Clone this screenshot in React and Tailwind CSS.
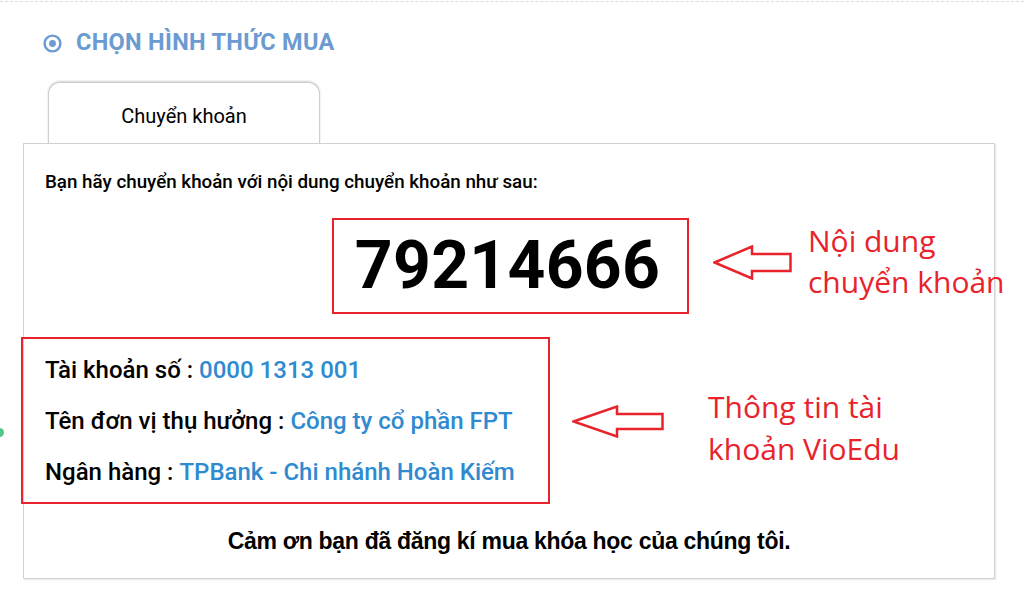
import React from "react";

function Arrow({ w, h, headW, shaftH }) {
  const cy = h / 2;
  const st = cy - shaftH / 2;
  const sb = cy + shaftH / 2;
  return (
    <svg width={w} height={h} viewBox={`0 0 ${w} ${h}`} className="block">
      <polygon
        points={`1.5,${cy} ${headW},1.5 ${headW},${st} ${w - 1.5},${st} ${w - 1.5},${sb} ${headW},${sb} ${headW},${h - 1.5}`}
        fill="none"
        stroke="#e8232b"
        strokeWidth="2.5"
        strokeLinejoin="miter"
      />
    </svg>
  );
}

export default function App() {
  return (
    <div className="relative w-[1024px] h-[603px] overflow-hidden bg-white font-['Roboto',sans-serif] text-black">
      <div className="border-t border-dashed border-[#dcdcdc] mt-px" />
      <div className="absolute left-[-5px] top-[428px] w-[9px] h-[9px] rounded-full bg-[#52c48e]" />

      {/* heading */}
      <div className="flex items-center pl-[43px] pt-[29px] h-[53px]">
        <svg width="19" height="19" viewBox="0 0 20 20" className="block">
          <circle cx="10" cy="10" r="8.3" fill="none" stroke="#6b9bd1" strokeWidth="2.6" />
          <circle cx="10" cy="10" r="3.6" fill="#6b9bd1" />
        </svg>
        <span className="ml-[14px] text-[23.5px] font-bold leading-none text-[#6b9bd1] tracking-[0.3px]">
          CHỌN HÌNH THỨC MUA
        </span>
      </div>

      {/* tab */}
      <div className="ml-[48px] mt-[27px] w-[272px] h-[62px] rounded-t-[12px] border border-b-0 border-[#cfcfcf] shadow-[0_-1px_2px_rgba(0,0,0,0.18)] flex items-center justify-center bg-white">
        <span className="text-[20px] leading-none mt-[4px]">Chuyển khoản</span>
      </div>

      {/* panel */}
      <div className="relative ml-[23px] w-[972px] h-[436px] -mt-px border border-[#d2d2d2] shadow-[1px_1px_1px_rgba(0,0,0,0.08)] bg-white">
        <div className="pl-[21px] pt-[26px] text-[18.8px] font-medium leading-[24px]">
          Bạn hãy chuyển khoản với nội dung chuyển khoản như sau:
        </div>

        <div className="flex justify-center mt-[24px] pl-[2px]">
          <div className="w-[357px] h-[96px] border-2 border-[#e8232b] flex items-center justify-center">
            <span className="text-[66px] font-bold leading-none tracking-[0.3px] -ml-[5px]">79214666</span>
          </div>
        </div>

        <div className="ml-[-3px] mt-[23px] w-[529px] h-[167px] border-2 border-[#e8232b] pl-[22px] pt-[5px] text-[24px] font-medium">
          <div className="h-[51px] flex items-center">
            Tài khoản số : <span className="ml-[6px] text-[#2f8ad0]">0000 1313 001</span>
          </div>
          <div className="h-[51px] flex items-center">
            Tên đơn vị thụ hưởng : <span className="ml-[6px] text-[#2f8ad0]">Công ty cổ phần FPT</span>
          </div>
          <div className="h-[51px] flex items-center">
            Ngân hàng : <span className="ml-[6px] text-[#2f8ad0]">TPBank - Chi nhánh Hoàn Kiếm</span>
          </div>
        </div>

        <div className="mt-[23px] text-center font-['Liberation_Sans',Arial,sans-serif] font-bold text-[23px] leading-[28px] tracking-[-0.3px]">
          Cảm ơn bạn đã đăng kí mua khóa học của chúng tôi.
        </div>

        {/* annotations (overlay) */}
        <div className="absolute left-[689px] top-[101px]">
          <Arrow w={79} h={35} headW={39} shaftH={17} />
        </div>
        <div className="absolute left-[784px] top-[76px] whitespace-nowrap font-['Open_Sans',sans-serif] text-[30px] leading-[41px] text-[#e8232b]">
          <div>Nội dung</div>
          <div>chuyển khoản</div>
        </div>

        <div className="absolute left-[548px] top-[261px]">
          <Arrow w={92} h={33} headW={45} shaftH={15} />
        </div>
        <div className="absolute left-[684px] top-[242px] whitespace-nowrap font-['Open_Sans',sans-serif] text-[30px] leading-[42px] text-[#e8232b]">
          <div>Thông tin tài</div>
          <div>khoản VioEdu</div>
        </div>
      </div>
    </div>
  );
}
